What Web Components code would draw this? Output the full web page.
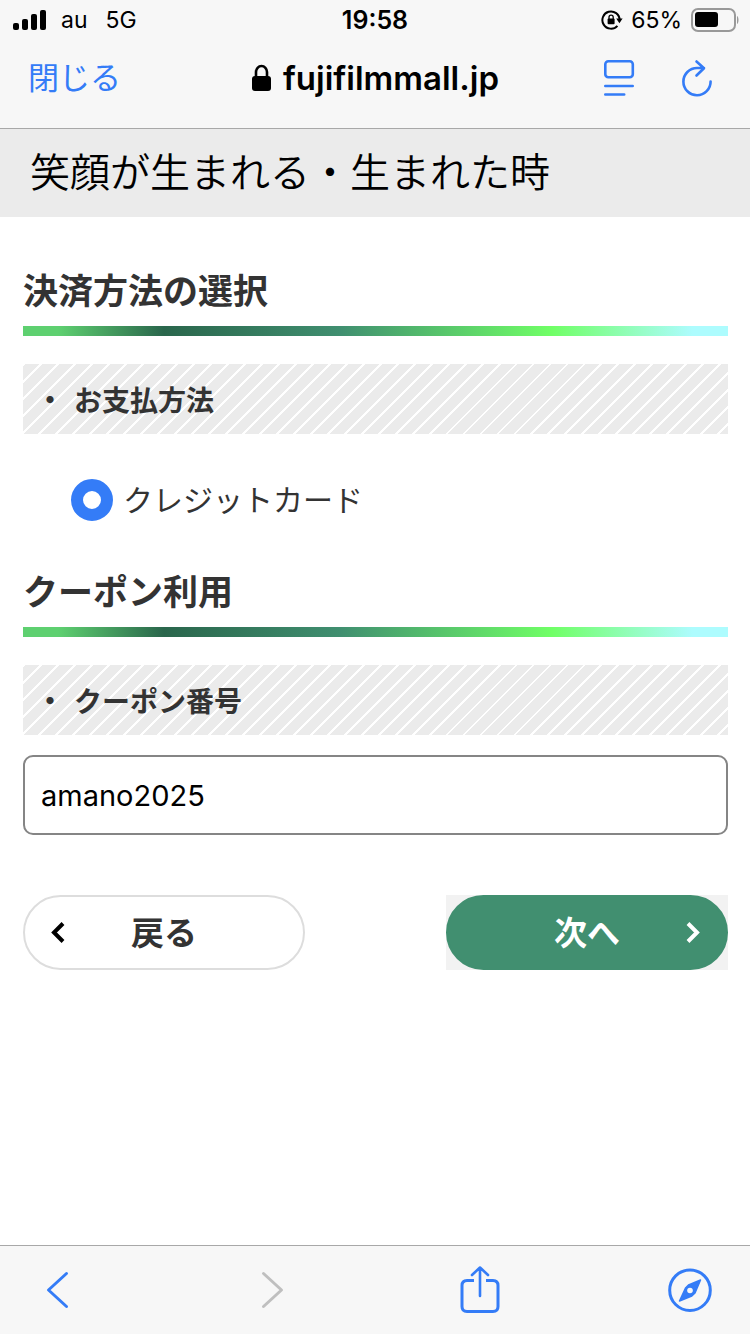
<!DOCTYPE html>
<html lang="ja">
<head>
<meta charset="utf-8">
<meta name="viewport" content="width=device-width, initial-scale=1">
<title>決済方法の選択</title>
<style>
  html { height: 100%; }
  body {
    margin: 0; min-height: 100%; display: flex; background: #fff; color: #333;
    font-family: Inter, "Noto Sans CJK JP", sans-serif;
    --blue: #347cf7; --bar: #f7f7f7; --line: #a8a8a8; --green: #418f70; --jp: "Noto Sans CJK JP", sans-serif;
  }
</style>
</head>
<body>
<checkout-page></checkout-page>
<script>
const define = (name, html) => {
  const template = document.createElement('template');
  template.innerHTML = html;
  customElements.define(name, class extends HTMLElement {
    constructor() {
      super();
      this.attachShadow({ mode: 'open' }).append(template.content.cloneNode(true));
    }
  });
};

define('status-bar', `
  <style>
    :host { display: grid; grid-template-columns: 1fr auto 1fr; align-items: center; height: 40px; padding: 0 12px; color: #000; font-size: 23px; line-height: 40px; }
    div { display: flex; align-items: center; }
    .left { gap: 14px; }
    .left span + span { margin-left: 4px; }
    .right { justify-content: flex-end; gap: 8px; }
    time { font-size: 25px; font-weight: 600; }
    svg { display: block; flex: none; }
    .battery { margin-right: -2px; }
  </style>
  <div class="left">
    <svg width="35" height="22" viewBox="0 0 35 22" aria-hidden="true"><rect x="1" y="14" width="6" height="7" rx="2"/><rect x="10" y="10" width="6" height="11" rx="2"/><rect x="19" y="5" width="6" height="16" rx="2"/><rect x="28" y="1" width="6" height="20" rx="2"/></svg>
    <span>au</span><span>5G</span>
  </div>
  <time>19:58</time>
  <div class="right">
    <svg width="22" height="22" viewBox="0 0 22 22" aria-hidden="true"><path d="M16.4 16.8A8.6 8.6 0 1 1 18.6 11" fill="none" stroke="#000" stroke-width="2"/><path d="M15.2 9.6h6.4l-3.2 4.6z"/><rect x="6.6" y="9.4" width="7" height="5.8" rx="1"/><path d="M8 10V8.2a2.1 2.1 0 0 1 4.200 0V10" fill="none" stroke="#000" stroke-width="1.300"/></svg>
    <span>65%</span>
    <svg class="battery" width="50" height="24" viewBox="0 0 50 24" aria-hidden="true"><rect x="2" y="1" width="43" height="22" rx="6" fill="none" stroke="#999" stroke-width="2"/><rect x="5" y="4" width="23" height="15" rx="3"/><path d="M47 8c2 1 2 7 0 8z" fill="#999"/></svg>
  </div>
`);

define('address-bar', `
  <style>
    :host { display: grid; grid-template-columns: 1fr auto 1fr; align-items: center; height: 89px; box-sizing: border-box; padding: 0 28px 12px; border-bottom: 1px solid var(--line); }
    button { border: 0; padding: 0; background: none; color: var(--blue); font: 31px/40px var(--jp); justify-self: start; cursor: pointer; }
    .close { padding-bottom: 4px; }
    .site { display: flex; align-items: center; gap: 12px; color: #000; font-size: 33px; line-height: 40px; font-weight: 600; }
    .tools { display: flex; justify-content: flex-end; gap: 44px; padding-right: 8px; }
    svg { display: block; }
  </style>
  <button type="button" class="close">閉じる</button>
  <div class="site">
    <svg width="20" height="28" viewBox="0 0 20 28" aria-hidden="true"><rect x="1" y="12" width="19" height="15" rx="3"/><path d="M5 13V8a5.500 6 0 0 1 11 0v5" fill="none" stroke="#000" stroke-width="2.600"/></svg>
    <span>fujifilmmall.jp</span>
  </div>
  <div class="tools">
    <button type="button" aria-label="表示設定"><svg width="34" height="38" viewBox="0 0 34 38" fill="none" stroke="#347cf7" stroke-width="2.600" stroke-linecap="round"><rect x="3.300" y="2.300" width="27.500" height="16" rx="3"/><path d="M3.300 27h27.400M3.300 35.500h18.900"/></svg></button>
    <button type="button" aria-label="再読み込み"><svg width="34" height="38" viewBox="0 0 34 38" fill="none" stroke="#347cf7" stroke-width="2.600" stroke-linecap="round" stroke-linejoin="round"><path d="M30.600 22.500A13.600 13.600 0 1 1 17 9h7M16.500 2.500L24 9.200L16.500 16.500"/></svg></button>
  </div>
`);

define('site-title', `
  <style>
    :host { display: block; padding: 0 30px 6px; background: #ebebeb; color: #000; }
    p { margin: 0; font: 350 40px/82px var(--jp); }
  </style>
  <p><slot></slot></p>
`);

define('section-heading', `
  <style>
    :host { display: block; padding-bottom: 10px; }
    h2 { margin: 0 0 14px; font: 700 35px/46px var(--jp); }
    div { height: 10px; background: linear-gradient(90deg, #5ed070 5%, #2a664c 20%, #408f70 45%, #70ff66 75%, #adfcfe 95%); }
  </style>
  <h2><slot></slot></h2><div></div>
`);

define('striped-label', `
  <style>
    :host { display: block; margin-top: 18px; padding: 0 13px; background: repeating-linear-gradient(135deg, #fff 0 2px, #ebebeb 2px 12px); }
    h3 { display: flex; gap: 10px; margin: 0; font: 700 28px/70px var(--jp); }
  </style>
  <h3><span>・</span><slot></slot></h3>
`);

define('payment-option', `
  <style>
    :host { display: block; padding: 36px 48px 37px; }
    label { display: flex; align-items: center; gap: 10px; width: fit-content; font: 30px/56px var(--jp); }
    input { appearance: none; flex: none; box-sizing: border-box; width: 42px; height: 42px; margin: 0; border: 12px solid var(--blue); border-radius: 50%; background: #fff; }
    span { padding-bottom: 4px; }
  </style>
  <label><input type="radio" name="payment" checked><span><slot></slot></span></label>
`);

define('coupon-field', `
  <style>
    :host { display: block; margin-top: 20px; }
    input { display: block; box-sizing: border-box; width: 100%; height: 80px; margin: 0; padding: 0 16px; border: 2px solid #858585; border-radius: 10px; background: #fff; color: #000; font: 29px/40px Inter, sans-serif; }
  </style>
  <input type="text" value="amano2025" aria-label="クーポン番号">
`);

define('page-actions', `
  <style>
    :host { display: flex; justify-content: space-between; margin-top: 60px; }
    div { width: 40%; }
    .next-box { background: #f2f2f2; }
    button { display: grid; grid-template-columns: 20px 1fr 20px; align-items: center; box-sizing: border-box; width: 100%; height: 75px; padding: 0 24px; border: 2px solid #ddd; border-radius: 38px; background: #fff; color: #333; font: 700 33px/48px var(--jp); cursor: pointer; }
    .next { border-color: var(--green); background: var(--green); color: #fff; }
    svg { display: block; fill: none; stroke-width: 4; }
    span { grid-column: 2; padding-bottom: 4px; }
  </style>
  <div><button type="button"><svg width="20" height="24" viewBox="0 0 20 24" stroke="#000" aria-hidden="true"><path d="M14 2.500L5 11.500l9 9"/></svg><span>戻る</span></button></div>
  <div class="next-box"><button type="button" class="next"><span>次へ</span><svg width="20" height="24" viewBox="0 0 20 24" stroke="#fff" aria-hidden="true"><path d="M6 2.500l9 9l-9 9"/></svg></button></div>
`);

define('browser-toolbar', `
  <style>
    :host { display: flex; justify-content: space-between; align-items: center; height: 89px; box-sizing: border-box; padding: 0 38px 0 36px; border-top: 1px solid var(--line); background: var(--bar); }
    button { border: 0; padding: 0; background: none; cursor: pointer; }
    svg { display: block; fill: none; stroke: #347cf7; stroke-width: 3; stroke-linecap: round; stroke-linejoin: round; }
    button:disabled svg { stroke: #bfbfbf; }
  </style>
  <button type="button" aria-label="戻る"><svg width="44" height="50" viewBox="0 0 44 50"><path d="M30.500 8.500L12.500 25L30.500 41.500"/></svg></button>
  <button type="button" aria-label="進む" disabled><svg width="44" height="50" viewBox="0 0 44 50"><path d="M16.500 8.500L34.500 25L16.500 41.500"/></svg></button>
  <button type="button" aria-label="共有"><svg width="44" height="50" viewBox="0 0 44 50"><path d="M17 15.500h-7q-5 0-5 5v21q0 5 5 5h26q5 0 5-5v-21q0-5-5-5h-7" stroke-linecap="butt"/><path d="M23 31V3M15 10l8-7.500l8 7.500" stroke-width="2.600"/></svg></button>
  <button type="button" aria-label="ブラウザで開く"><svg width="44" height="50" viewBox="0 0 44 50"><circle cx="22" cy="25.200" r="20.300"/><path d="M32.500 15L27 28L23.800 31L11.500 36L17.500 23L20.500 20Z" fill="#347cf7" stroke-width="1.500"/><circle cx="22" cy="25.500" r="2.800" fill="#f7f7f7" stroke="none"/></svg></button>
`);

define('checkout-page', `
  <style>
    :host { display: flex; flex-direction: column; flex: 1; min-width: 0; }
    header { background: var(--bar); }
    main { flex: 1; padding: 49px 22px 40px 23px; }
  </style>
  <header><status-bar></status-bar><address-bar></address-bar></header>
  <site-title>笑顔が生まれる・生まれた時</site-title>
  <main>
    <section-heading>決済方法の選択</section-heading>
    <striped-label>お支払方法</striped-label>
    <payment-option>クレジットカード</payment-option>
    <section-heading>クーポン利用</section-heading>
    <striped-label>クーポン番号</striped-label>
    <coupon-field></coupon-field>
    <page-actions></page-actions>
  </main>
  <browser-toolbar></browser-toolbar>
`);
</script>
</body>
</html>
